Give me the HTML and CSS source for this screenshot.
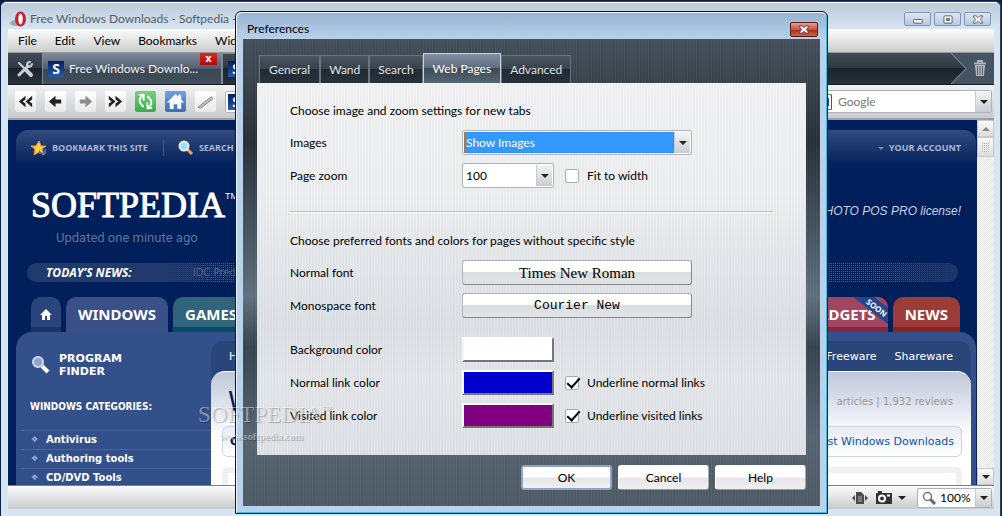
FILE: index.html
```html
<!DOCTYPE html>
<html lang="en">
<head>
<meta charset="utf-8">
<title>Free Windows Downloads - Softpedia</title>
<link rel="stylesheet" href="styles.css">
</head>
<body>
<div class="window">
  <header class="titlebar">
    <svg class="opera" viewBox="0 0 18 16"><ellipse cx="6" cy="12" rx="6" ry="3" fill="#8b8d92" opacity=".7"/><ellipse cx="10.500" cy="8" rx="5.500" ry="7.500" fill="#c8202c"/><ellipse cx="10.500" cy="8" rx="2.300" ry="5.600" fill="#eef2f7"/></svg>
    <span class="title">Free Windows Downloads - Softpedia - Opera</span>
    <div class="winbtns">
      <button class="winbtn" aria-label="Minimize"><svg viewBox="0 0 12 10"><rect x="1" y="5" width="10" height="4" rx="1" fill="#fff" stroke="#49525f"/></svg></button>
      <button class="winbtn" aria-label="Maximize"><svg viewBox="0 0 12 10"><rect x="1.500" y="1" width="9" height="8" rx="1" fill="#fff" stroke="#49525f"/><rect x="4.500" y="4" width="3" height="2" fill="#9aa8bd" stroke="#49525f"/></svg></button>
      <button class="winbtn" aria-label="Close"><svg viewBox="0 0 12 10"><path d="M1 1h3l2 2 2-2h3v1L8.500 5 11 8v1H8L6 7 4 9H1V8l2.500-3L1 2z" fill="#fff" stroke="#49525f"/></svg></button>
    </div>
  </header>
  <nav class="menubar"><button>File</button><button>Edit</button><button>View</button><button>Bookmarks</button><button>Widgets</button></nav>
  <div class="tabbar">
    <button class="tools" aria-label="Panels"><svg viewBox="0 0 18 18" fill="none" stroke="#c9cfd6" stroke-linecap="round"><path d="M3 3l5 5" stroke-width="2"/><path d="M10 10l5 5" stroke-width="4"/><path d="M3 15l9-9" stroke-width="3"/><path d="M11 5a3 3 0 0 1 3-3M12 7a4 4 0 0 0 4-3" stroke-width="2"/></svg></button>
    <div class="tab active"><span class="fav">S</span><span class="tabtext">Free Windows Downlo...</span><button class="tabclose" aria-label="Close tab">x</button></div>
    <div class="tab"><span class="fav">S</span></div>
    <button class="trash" aria-label="Closed tabs"><svg class="chev" viewBox="0 0 20 30" preserveAspectRatio="none"><path d="M0 0h20v30H0l15-15z" fill="#465362"/><path d="M0 0l15 15L0 30" fill="none" stroke="#7b8794"/></svg><svg class="bin" viewBox="0 0 14 17"><path d="M1 3.500h12M5 3V1h4v2" fill="none" stroke="#aeb3b8" stroke-width="2"/><path d="M2 5h10l-1 11H3z" fill="#b6babf"/><path d="M4.500 6v9M7 6v9M9.500 6v9" stroke="#555d66"/></svg></button>
  </div>
  <div class="toolbar">
    <button class="tb" aria-label="Rewind"><svg viewBox="0 0 20 20"><path d="M10 4v4l-3 2 3 2v4l-7-6zM17 4v4l-3 2 3 2v4l-7-6z" fill="#222"/></svg></button>
    <button class="tb" aria-label="Back"><svg viewBox="0 0 20 20"><path d="M3 10l7-6v4h6v4h-6v4z" fill="#222"/></svg></button>
    <button class="tb" aria-label="Forward"><svg viewBox="0 0 20 20"><path d="M17 10l-7-6v4H4v4h6v4z" fill="#8c8c8c"/></svg></button>
    <button class="tb" aria-label="Fast forward"><svg viewBox="0 0 20 20"><path d="M10 4v4l3 2-3 2v4l7-6zM3 4v4l3 2-3 2v4l7-6z" fill="#222"/></svg></button>
    <button class="tb green" aria-label="Reload"><svg viewBox="0 0 20 20" fill="none" stroke="#fff" stroke-width="2"><path d="M8 2L4 7v4l4 5M12 18l4-5V9l-4-5"/><path d="M3 3h5v6M17 17h-5v-6"/></svg></button>
    <button class="tb blue" aria-label="Home"><svg viewBox="0 0 20 20"><path d="M10 2l3 3V3h3v5l3 3h-3v7h-4v-5H8v5H4v-7H1z" fill="#fff"/></svg></button>
    <button class="tb" aria-label="Wand"><svg viewBox="0 0 20 20"><path d="M2 16L16 5l2 2L5 17z" fill="#bfbfbf" stroke="#888"/></svg></button>
    <div class="address"><span class="fav">S</span></div>
    <div class="searchbox"><svg viewBox="0 0 10 16"><path d="M0 .5h8.500v15H0" fill="none" stroke="#3c9a3c"/><path d="M8.500 1v14" stroke="#c62222"/><path d="M2 3l3 2v6H2" fill="none" stroke="#1c3fa8" stroke-width="2"/></svg><input type="text" placeholder="Google" aria-label="Search"><span class="arrow"></span></div>
  </div>
  <div class="viewport">
    <main class="page">
      <div class="topstrip">
        <svg class="i16" viewBox="0 0 16 16"><path d="M8 1l2 5h5l-4 3 2 6-5-3-5 3 1-6-4-3h5z" fill="#fbd04f" stroke="#e8972a"/><path d="M8 10l3 3 4-5v6H8z" fill="#2f77cf"/></svg>
        <a href="#">BOOKMARK THIS SITE</a><span class="bar"></span>
        <svg class="i16" viewBox="0 0 16 16"><path d="M9 9l5 5" stroke="#f5a35b" stroke-width="3"/><circle cx="6" cy="6" r="4.500" fill="#9fdcf8" stroke="#e5f0fb" stroke-width="2"/></svg>
        <a href="#">SEARCH</a>
        <a class="account" href="#"><span class="tri"></span>YOUR ACCOUNT</a>
      </div>
      <div class="brand">
        <div><div class="logo">SOFTPEDIA<sup>TM</sup></div><div class="updated">Updated one minute ago</div></div>
        <em>PHOTO POS PRO license!</em>
      </div>
      <div class="news"><strong>TODAY’S NEWS:</strong><span>IDC Predicts</span></div>
      <nav class="sitetabs">
        <a class="home" href="#" aria-label="Home"><svg viewBox="0 0 12 11"><path d="M6 0l6 6h-2v5H7V7H5v4H2V6H0z" fill="#fff"/></svg></a>
        <a class="win" href="#">WINDOWS</a><a class="games" href="#">GAMES</a>
        <a class="gadgets" href="#">GADGETS<span class="soon">SOON</span></a><a class="newstab" href="#">NEWS</a>
      </nav>
      <div class="panel">
        <aside class="side">
          <div class="finder"><svg viewBox="0 0 20 20"><path d="M11 11l6 6" stroke="#fff" stroke-width="4"/><circle cx="7" cy="7" r="5" fill="#8fa3cc" stroke="#d4dcee" stroke-width="2"/></svg><strong>PROGRAM<br>FINDER</strong></div>
          <h2>WINDOWS CATEGORIES:</h2>
          <ul><li><a href="#">Antivirus</a></li><li><a href="#">Authoring tools</a></li><li><a href="#">CD/DVD Tools</a></li></ul>
        </aside>
        <section class="content">
          <div class="subnav"><a href="#">Home</a><a class="push" href="#">Freeware</a><a href="#">Shareware</a></div>
          <div class="sheet">
            <div class="sheethead"><h1>Windows</h1><span>articles | 1,932 reviews</span></div>
            <div class="crumb"><b>Categories</b><a href="#">Latest Windows Downloads</a></div>
            <div class="box"></div>
          </div>
        </section>
      </div>
    </main>
    <div class="scroll"><button aria-label="Scroll up"><span class="up"></span></button><div class="thumb"><i></i></div><button class="last" aria-label="Scroll down"><span class="tri"></span></button></div>
  </div>
  <footer class="status">
    <svg class="fit" viewBox="0 0 16 14"><path d="M4 1h5l3 3v9H4z" fill="#4a4a4a"/><path d="M6 6h4M6 8h4M6 10h4" stroke="#aaa"/><path d="M3 4L0 7l3 3zM13 4l3 3-3 3z" fill="#4a4a4a"/></svg>
    <svg class="cam" viewBox="0 0 16 13"><path d="M0 2h2V0h4v2h10v11H0z" fill="#333"/><circle cx="6" cy="7.500" r="3" fill="#333" stroke="#fff" stroke-width="2"/><path d="M11 4.500h3" stroke="#fff" stroke-width="2"/></svg>
    <span class="tri"></span>
    <div class="zoom"><svg viewBox="0 0 14 14"><path d="M8 8l5 5" stroke="#666" stroke-width="3"/><circle cx="5.500" cy="5.500" r="4" fill="#fff" stroke="#777" stroke-width="1.500"/></svg><select aria-label="Zoom"><option>100%</option></select><span class="arrow"></span></div>
  </footer>
</div>

<div class="dialog" role="dialog" aria-labelledby="dlg">
  <div class="dlghead"><span id="dlg">Preferences</span><button class="dlgclose" aria-label="Close dialog"><svg viewBox="0 0 12 10"><path d="M1 1h3l2 2 2-2h3v1L8.500 5 11 8v1H8L6 7 4 9H1V8l2.500-3L1 2z" fill="#fff" stroke="#5c3434"/></svg></button></div>
  <div class="dlgbody">
    <div class="dlgtabs"><button>General</button><button>Wand</button><button>Search</button><button class="on">Web Pages</button><button>Advanced</button></div>
    <form class="sheetform">
      <p>Choose image and zoom settings for new tabs</p>
      <div class="grid">
        <label for="img">Images</label><div class="combo wide"><select id="img" class="sel"><option>Show Images</option></select><span class="arrow"></span></div>
        <label for="pz">Page zoom</label><div class="pair"><div class="combo"><select id="pz"><option>100</option></select><span class="arrow"></span></div><label class="chk"><input type="checkbox">Fit to width</label></div>
      </div>
      <hr>
      <p>Choose preferred fonts and colors for pages without specific style</p>
      <div class="grid">
        <label for="nf">Normal font</label><button type="button" id="nf" class="fontbtn times">Times New Roman</button>
        <label for="mf">Monospace font</label><button type="button" id="mf" class="fontbtn courier">Courier New</button>
      </div>
      <div class="grid colors">
        <label for="bg">Background color</label><input type="color" id="bg" value="#ffffff">
        <label for="nl">Normal link color</label><div class="pair"><input type="color" id="nl" value="#0000cc"><label class="chk"><input type="checkbox" checked>Underline normal links</label></div>
        <label for="vl">Visited link color</label><div class="pair"><input type="color" id="vl" value="#800080"><label class="chk"><input type="checkbox" checked>Underline visited links</label></div>
      </div>
    </form>
    <div class="actions"><button class="ok">OK</button><button>Cancel</button><button>Help</button></div>
  </div>
</div>
<div class="watermark"><div>SOFTPEDIA<sup>TM</sup></div><span>www.softpedia.com</span></div>
</body>
</html>
```
FILE: styles.css
```css
* { box-sizing: border-box; }
body { margin: 0; padding: 1px 1px 0; height: 100vh; background: #0b1f4b; font: 12px/16px Lato, "Noto Sans", sans-serif; color: #000; overflow: hidden; position: relative; display: flex; }
button, input, select { font: inherit; color: inherit; margin: 0; padding: 0; border: 0; background: none; }
a { color: inherit; text-decoration: none; }
svg { display: block; flex: none; }
.window { flex: 1; display: flex; flex-direction: column; min-width: 0; min-height: 0; border: 1px solid #39424a; border-width: 1px 1px 0 0; border-radius: 6px 6px 0 0; padding: 0 6px 7px 7px; background: #d7e4f2; }
.titlebar { height: 27px; flex: none; margin: 0 -6px 0 -7px; padding: 6px 9px 0; border-radius: 6px 6px 0 0; border-top: 1px solid #fff; background: linear-gradient(#bccbd8, #d7e4f2); display: flex; align-items: center; color: #535b66; }
.opera { width: 18px; height: 16px; }
.title { margin-left: 2px; flex: 1; font-size: 12px; }
.winbtns { display: flex; gap: 3px; }
.winbtn { width: 27px; height: 14px; border: 1px solid #8396b4; border-radius: 2px; background: linear-gradient(#dbe6f2, #b7c8de); display: flex; align-items: center; justify-content: center; }
.winbtn svg { width: 12px; height: 9px; }
.menubar { height: 24px; flex: none; background: linear-gradient(#fcfcfc, #cbcdcd); border-bottom: 1px solid #999; padding-left: 10px; display: flex; gap: 18px; align-items: center; }
.tabbar { height: 32px; flex: none; background: linear-gradient(#424b57 0, #303943 48%, #1b242c 50%, #28323a 100%); display: flex; border-bottom: 1px solid #151b20; }
.tools { width: 34px; display: flex; align-items: center; justify-content: center; }
.tools svg { width: 18px; height: 18px; }
.tab { position: relative; width: 180px; border: 1px solid #7e8a98; border-bottom: 0; padding-left: 5px; display: flex; align-items: center; gap: 5px; color: #eef2f6; }
.tab.active { background: linear-gradient(#7c889a, #536072 48%, #3b4653 50%, #40505b); }
.tabclose { position: absolute; right: 4px; top: -1px; width: 17px; height: 12px; background: linear-gradient(#e02424, #a80d0d); color: #fff; font: bold 10px/10px "DejaVu Sans", sans-serif; }
.fav { width: 16px; height: 16px; background: linear-gradient(#001f5f, #2a5aa5); color: #fff; font: bold 14px/16px "Open Sans", sans-serif; text-align: center; }
.trash { margin-left: auto; display: flex; align-items: center; background: linear-gradient(to right, transparent 20px, #465362 20px); padding-right: 7px; }
.chev { width: 20px; height: 31px; }
.bin { width: 14px; height: 17px; margin-left: 2px; }
.toolbar { height: 35px; flex: none; background: linear-gradient(#f1f1f4, #c8cbcb); border-bottom: 2px solid #9da0a2; display: flex; align-items: center; gap: 9px; padding: 0 2px 0 7px; }
.tb { width: 21px; height: 21px; border-radius: 2px; background: linear-gradient(#fff, #e9e9e9); }
.tb svg { width: 21px; height: 21px; padding: 1px; }
.green { background: linear-gradient(#78d17f, #35ad4b); }
.blue { background: linear-gradient(#6fa1e2, #3a70b6); }
.address, .searchbox, .zoom, .combo { display: flex; align-items: center; background: #fff; border: 1px solid #adb3bd; border-radius: 2px; }
.address { flex: 1; height: 22px; padding-left: 2px; }
.searchbox { width: 188px; height: 23px; padding-left: 18px; }
.searchbox svg { width: 10px; height: 16px; }
.searchbox input { flex: 1; min-width: 0; padding-left: 5px; outline: 0; }
.searchbox input::placeholder { color: #777; opacity: 1; }
.arrow { align-self: stretch; width: 16px; flex: none; border-left: 1px solid #c8cbd0; background: linear-gradient(#f5f5f6, #c9ccd1); display: flex; align-items: center; justify-content: center; }
.arrow::after, .tri { content: ""; width: 0; height: 0; border: 4px solid transparent; border-top-color: #222; border-bottom: 0; }
.viewport { flex: 1 1 0; display: flex; min-height: 0; overflow: hidden; }
.page { flex: 1; min-width: 0; background: #001f5b; padding: 10px 1px 0 8px; color: #fff; display: flex; flex-direction: column; }
.topstrip { height: 36px; flex: none; border-radius: 12px 12px 0 0; background: linear-gradient(#334b7d, #001f5b); padding: 0 15px; display: flex; align-items: center; color: #a9b7d4; font: bold 9px/14px "Open Sans", sans-serif; gap: 5px; }
.i16 { width: 16px; height: 16px; }
.bar { width: 1px; height: 16px; background: #405a8e; margin: 0 9px 0 10px; }
.account { margin-left: auto; display: flex; align-items: center; gap: 5px; }
.account .tri { border-width: 3px; border-bottom: 0; border-top-color: #7388b3; }
.brand { display: flex; flex: none; justify-content: space-between; padding: 19px 15px 0; height: 97px; }
.logo { font: 36px/40px "Liberation Serif", serif; -webkit-text-stroke: 1px #fff; }
.logo sup { font: 9px/10px "Liberation Sans", sans-serif; vertical-align: 18px; -webkit-text-stroke: 0; }
.updated { color: #5f7299; font: 13px/18px Roboto, sans-serif; padding: 4px 0 0 25px; }
.brand em { font: italic 12px/16px "Liberation Sans", sans-serif; color: #c8d2e6; margin-top: 18px; }
.news { height: 19px; margin: 0 18px 0 11px; border-radius: 10px; padding-left: 19px; display: flex; align-items: center; gap: 61px; background: linear-gradient(to right, #213a6e 15%, transparent 22%, transparent 90%, #1c356a), repeating-linear-gradient(transparent 0 1px, #071f58 1px 2px), repeating-linear-gradient(to right, #4a6090 0 1px, #071f58 1px 2px); flex: none; }
.news strong { font: italic bold 12px/18px "Open Sans", sans-serif; }
.news span { font: 10px/16px "DejaVu Sans", sans-serif; color: #4a5f8c; }
.sitetabs { display: flex; height: 35px; margin: 15px 16px 0 15px; gap: 5px; flex: none; font: bold 15px/35px "Noto Sans", sans-serif; }
.sitetabs a { border-radius: 10px 10px 0 0; padding: 0 12px; }
.sitetabs .home { width: 30px; padding: 12px 9px; background: linear-gradient(#2a447c 30px, #1c3365 30px); }
.home svg { width: 12px; height: 11px; }
.sitetabs .win { background: #3a5088; }
.games { background: linear-gradient(#2f647a 30px, #064c69 30px); }
.gadgets { margin-left: auto; position: relative; overflow: hidden; background: linear-gradient(#a24560 30px, #842845 30px); }
.sitetabs .newstab { background: linear-gradient(#9c3c38 30px, #8b2420 30px); }
.soon { position: absolute; right: -22px; top: 4px; width: 66px; background: #23478a; font: bold 8px/13px "Open Sans", sans-serif; text-align: center; transform: rotate(38deg); }
.panel { flex: 1; min-height: 0; display: flex; background: #33508a; border-radius: 16px 16px 0 0; padding-right: 5px; }
.side { width: 195px; flex: none; padding: 20px 1px 0 5px; }
.finder { display: flex; gap: 8px; padding-left: 10px; align-items: center; font: bold 11px/13px "DejaVu Sans", sans-serif; }
.finder svg { width: 20px; height: 20px; }
.side h2 { margin: 21px 0 15px 9px; font: bold 10px/16px "DejaVu Sans Condensed", "DejaVu Sans", sans-serif; }
.side ul { list-style: none; margin: 0; padding: 0; font: bold 10px/18px "DejaVu Sans", sans-serif; }
.side li { border-top: 1px solid #4a669f; padding-left: 10px; display: flex; gap: 7px; }
.side li::before { content: "❖"; font-size: 8px; width: 8px; color: #9fb1d8; }
.content { flex: 1; min-width: 0; padding-top: 9px; display: flex; flex-direction: column; }
.subnav { height: 42px; margin-bottom: -12px; padding: 0 18px; border-radius: 12px 12px 0 0; background: #2a4579; display: flex; gap: 18px; font: 11px/32px "DejaVu Sans", sans-serif; flex: none; }
.push { margin-left: auto; }
.sheet { flex: 1; min-height: 0; overflow: hidden; border-top: 1px solid #fff; border-radius: 14px 14px 0 0; background: linear-gradient(#bfc7da, #fff 65px); padding: 9px 9px 0 11px; color: #001f5b; }
.sheethead { display: flex; justify-content: space-between; padding: 0 9px 0 6px; font: 10px/41px "DejaVu Sans", sans-serif; color: #999; height: 45px; }
.sheethead h1 { margin: 0; font: 26px/42px "DejaVu Sans", sans-serif; color: #001f5b; }
.crumb { display: flex; justify-content: space-between; height: 31px; border: 1px solid #ccd3e2; border-radius: 6px; padding: 0 7px; font: 11px/30px "DejaVu Sans", sans-serif; background: linear-gradient(#e8ebf3, #fff); }
.crumb a { color: #0554b4; }
.box { height: 60px; margin-top: 10px; border: 6px solid #eef0f6; border-radius: 6px; }
.scroll { width: 17px; flex: none; display: flex; flex-direction: column; background: conic-gradient(#e2e2e2 25%, #fff 0 50%, #e2e2e2 0 75%, #fff 0) 0 0 / 2px 2px; }
.scroll button, .thumb { height: 17px; flex: none; border: 1px solid #c8c8c8; background: linear-gradient(#fafafa, #ddd); display: flex; align-items: center; justify-content: center; }
.thumb { height: 20px; }
.thumb i { width: 9px; height: 9px; background: conic-gradient(#aaa 25%, #eee 0 50%, #eee 0 75%, #eee 0) 0 0 / 2px 2px; }
.up { border: 4px solid transparent; border-bottom-color: #888; border-top: 0; }
.scroll .last { margin-top: auto; }
.status { height: 24px; flex: none; border-top: 1px solid #7b8086; background: linear-gradient(#fcfcfc, #c8cbcb); display: flex; align-items: center; justify-content: flex-end; padding-right: 2px; }
.fit { width: 16px; height: 14px; }
.cam { width: 16px; height: 13px; margin: 0 6px 0 8px; }
.zoom { margin-left: 11px; width: 75px; height: 20px; padding-left: 4px; }
.zoom svg { width: 14px; height: 14px; }
.zoom select { flex: 1; min-width: 0; appearance: none; padding-left: 4px; }

.dialog { position: absolute; left: 235px; top: 11px; width: 593px; border: 1px solid #10171d; border-radius: 6px 6px 0 0; padding: 0 7px 7px; background: #b9d1ea; box-shadow: inset 1px 1px #eef6fc, inset -1px -1px #2cc5e4; }
.dlghead { height: 26px; margin: 1px -6px 0; padding: 6px 8px 0 10px; border-radius: 6px 6px 0 0; background: linear-gradient(#98b4d2, #b9d1ea); display: flex; justify-content: space-between; align-items: center; }
.dlgclose { width: 28px; height: 15px; border: 1px solid #5a1a18; border-radius: 2px; background: linear-gradient(#e3a191, #c4543c 50%, #aa2c18 52%, #cd6548); display: flex; align-items: center; justify-content: center; }
.dlgclose svg { width: 12px; height: 9px; }
.dlgbody { padding: 14px 14px 16px; background: repeating-linear-gradient(to right, #ffffff0c 0 1px, #0000 1px 3px), linear-gradient(#434f59, #282e36 22%, #4b5a66 45%, #5f6f7c 55%, #36424d 66%, #56646f 85%, #4c5863); }
.dlgtabs { display: flex; align-items: flex-end; padding-left: 2px; height: 30px; }
.dlgtabs button { height: 28px; padding: 0 8px; border: 1px solid #69747f; border-bottom: 0; background: linear-gradient(#4a5560, #38424d 48%, #222b33 50%, #29313a); color: #dfe4e8; }
.dlgtabs button:first-child { padding: 0 9px; }
.dlgtabs .on { height: 30px; padding: 0 9px; border-color: #c5d2e0; background: linear-gradient(#8290a3, #5d6b7d 48%, #3d4a57 50%, #556673); color: #fff; }
.sheetform { height: 372px; padding: 20px 33px 0; background: repeating-linear-gradient(to right, #ffffff40 0 1px, #0000 1px 3px), linear-gradient(#efeff1, #e9ebed 30%, #d8dce1 65%, #dfe2e6 80%, #dadde1); }
.sheetform p { margin: 0 0 11px; line-height: 16px; }
.grid { display: grid; grid-template-columns: 172px auto; row-gap: 8px; align-items: center; justify-content: start; }
.combo { width: 92px; height: 25px; padding: 1px; }
.wide { width: 230px; }
.combo select { flex: 1; min-width: 0; align-self: stretch; appearance: none; padding-left: 2px; outline: 0; }
.combo .sel { background: #3399ff; color: #fff; border: 1px dotted #b7692a; padding-left: 1px; }
.pair { display: flex; align-items: center; gap: 11px; }
.chk { display: flex; align-items: center; gap: 8px; }
.chk input { appearance: none; width: 14px; height: 14px; border: 1px solid #a9abb0; border-radius: 2px; background: #fff; display: flex; position: relative; }
.chk input:checked::after { content: ""; position: absolute; left: 4px; top: -2px; width: 5px; height: 11px; border: solid #000; border-width: 0 2px 2px 0; transform: rotate(42deg); }
hr { border: 0; border-top: 1px solid #b9bcc0; border-bottom: 1px solid #fff; margin: 23px 0 20px; height: 2px; }
.fontbtn, .actions button { height: 25px; border: 1px solid #aeb1b5; border-right-color: #85888c; border-bottom-color: #85888c; border-radius: 3px; background: linear-gradient(#fff 45%, #dcdde0 50%, #e2e3e5); text-align: center; }
.fontbtn { width: 230px; }
.times { font: 15px/22px "Liberation Serif", serif; }
.courier { font: 13px/22px "Liberation Mono", monospace; }
.colors { margin-top: 19px; }
.colors input[type="color"] { width: 92px; height: 25px; border: 2px solid; border-color: #fff #767676 #767676 #f6f6f6; appearance: none; }
.colors input::-webkit-color-swatch-wrapper { padding: 0; }
.colors input::-webkit-color-swatch { border: 0; border-radius: 0; }
.actions { display: flex; justify-content: flex-end; gap: 6px; padding-top: 10px; }
.actions button { width: 91px; height: 25px; background: linear-gradient(#fff 45%, #e6e6e8 55%, #f0f0f1); border-color: #f5f5f5 #aaa #999 #fff; }
.actions .ok { border: 2px solid #8da4c6; }
.watermark { position: absolute; left: 198px; top: 402px; width: 126px; color: #ffffff70; text-shadow: 1px 1px 1px #00000040; text-align: right; pointer-events: none; font: 23px/26px "Liberation Serif", serif; white-space: nowrap; }
.watermark sup { font-size: 6px; line-height: 6px; vertical-align: 12px; }
.watermark span { display: block; font: bold 10px/18px "Liberation Serif", serif; padding-right: 21px; }
```
